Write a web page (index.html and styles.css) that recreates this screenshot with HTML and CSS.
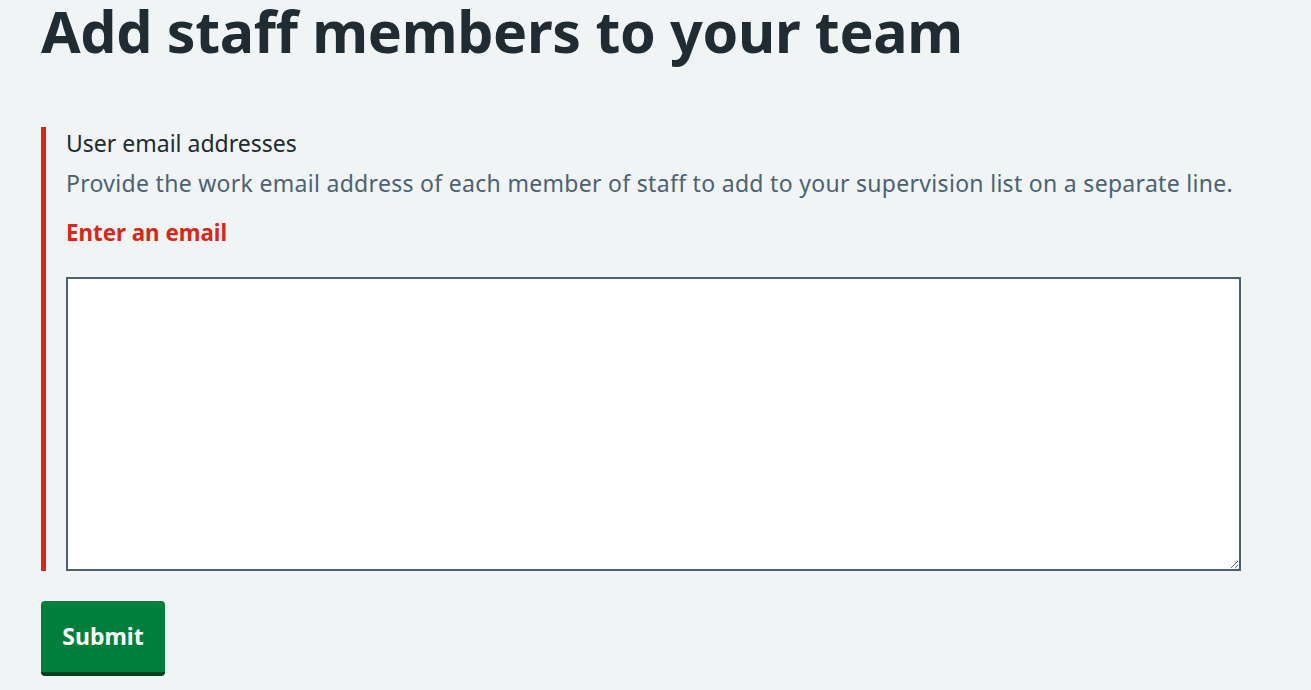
FILE: index.html
```html
<!DOCTYPE html>
<html lang="en">
<head>
<meta charset="utf-8">
<title>Add staff members to your team</title>
<link rel="stylesheet" href="styles.css">
</head>
<body>
<main class="page">
  <h1 class="title">Add staff members to your team</h1>
  <form class="form">
    <div class="group group--error">
      <label class="label" for="emails">User email addresses</label>
      <div class="hint">Provide the work email address of each member of staff to add to your supervision list on a separate line.</div>
      <div class="error-message">Enter an email</div>
      <textarea class="textarea" id="emails" name="emails"></textarea>
    </div>
    <button class="button" type="submit">Submit</button>
  </form>
</main>
</body>
</html>
```

FILE: styles.css
```css
html, body {
  margin: 0;
  padding: 0;
  background: #f0f4f5;
  color: #212b32;
  font-family: "Noto Sans", "Open Sans", Arial, sans-serif;
}
.page {
  padding: 0 41px;
}
.title {
  margin: 0;
  padding-top: 0;
  font-size: 57.3px;
  line-height: 62px;
  font-weight: 700;
  letter-spacing: -0.3px;
  color: #212b32;
}
.form {
  margin-top: 65px;
}
.group {
  display: flex;
  flex-direction: column;
  align-items: flex-start;
}
.group--error {
  border-left: 5px solid #d5281b;
  padding-left: 20px;
}
.label {
  font-size: 23px;
  line-height: 32px;
  color: #212b32;
}
.hint {
  margin-top: 8px;
  font-size: 23px;
  line-height: 32px;
  letter-spacing: 0.3px;
  color: #4c6272;
}
.error-message {
  margin-top: 18px;
  font-size: 22.3px;
  line-height: 32px;
  font-weight: 700;
  color: #d5281b;
}
.textarea {
  margin-top: 28px;
  box-sizing: border-box;
  width: 1175px;
  height: 294px;
  border: 2px solid #4c6272;
  border-radius: 0;
  background: #fff;
  padding: 6px;
  font-family: inherit;
  font-size: 21px;
}
.button {
  display: block;
  margin-top: 30px;
  box-sizing: border-box;
  width: 124px;
  height: 75px;
  padding: 0 0 2px;
  border: 0;
  border-bottom: 4px solid #00401e;
  border-radius: 4px;
  background: #007f3b;
  color: #fff;
  font-family: inherit;
  font-size: 23px;
  line-height: 32px;
  font-weight: 700;
  cursor: pointer;
}
```
